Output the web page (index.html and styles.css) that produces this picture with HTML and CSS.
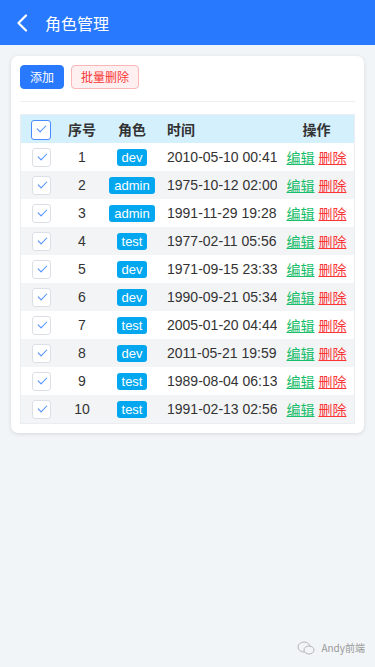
FILE: index.html
```html
<!DOCTYPE html>
<html lang="zh-CN">
<head>
  <meta charset="UTF-8">
  <meta name="viewport" content="width=device-width, initial-scale=1">
  <title>角色管理</title>
  <link rel="stylesheet" href="styles.css">
</head>
<body>
  <div class="navbar">
    <svg class="back" width="12" height="18" viewBox="0 0 12 18">
      <path d="M10 1.5 L2.5 9 L10 16.5" fill="none" stroke="#fff" stroke-width="2.2" stroke-linecap="round" stroke-linejoin="round"/>
    </svg>
    <span class="nav-title">角色管理</span>
  </div>

  <div class="card">
    <div class="toolbar">
      <button class="btn btn-primary">添加</button>
      <button class="btn btn-danger">批量删除</button>
    </div>

    <table class="table">
      <thead>
        <tr>
          <th class="col-check"><span class="check check-head"></span></th>
          <th class="col-no">序号</th>
          <th class="col-role">角色</th>
          <th class="col-time">时间</th>
          <th class="col-op">操作</th>
        </tr>
      </thead>
      <tbody>
        <tr><td class="col-check"><span class="check"></span></td><td class="col-no">1</td><td class="col-role"><span class="tag">dev</span></td><td class="col-time"><div class="clip">2010-05-10 00:41:20</div></td><td class="col-op"><a class="edit">编辑</a> <a class="del">删除</a></td></tr>
        <tr><td class="col-check"><span class="check"></span></td><td class="col-no">2</td><td class="col-role"><span class="tag">admin</span></td><td class="col-time"><div class="clip">1975-10-12 02:00:12</div></td><td class="col-op"><a class="edit">编辑</a> <a class="del">删除</a></td></tr>
        <tr><td class="col-check"><span class="check"></span></td><td class="col-no">3</td><td class="col-role"><span class="tag">admin</span></td><td class="col-time"><div class="clip">1991-11-29 19:28:45</div></td><td class="col-op"><a class="edit">编辑</a> <a class="del">删除</a></td></tr>
        <tr><td class="col-check"><span class="check"></span></td><td class="col-no">4</td><td class="col-role"><span class="tag">test</span></td><td class="col-time"><div class="clip">1977-02-11 05:56:31</div></td><td class="col-op"><a class="edit">编辑</a> <a class="del">删除</a></td></tr>
        <tr><td class="col-check"><span class="check"></span></td><td class="col-no">5</td><td class="col-role"><span class="tag">dev</span></td><td class="col-time"><div class="clip">1971-09-15 23:33:09</div></td><td class="col-op"><a class="edit">编辑</a> <a class="del">删除</a></td></tr>
        <tr><td class="col-check"><span class="check"></span></td><td class="col-no">6</td><td class="col-role"><span class="tag">dev</span></td><td class="col-time"><div class="clip">1990-09-21 05:34:50</div></td><td class="col-op"><a class="edit">编辑</a> <a class="del">删除</a></td></tr>
        <tr><td class="col-check"><span class="check"></span></td><td class="col-no">7</td><td class="col-role"><span class="tag">test</span></td><td class="col-time"><div class="clip">2005-01-20 04:44:18</div></td><td class="col-op"><a class="edit">编辑</a> <a class="del">删除</a></td></tr>
        <tr><td class="col-check"><span class="check"></span></td><td class="col-no">8</td><td class="col-role"><span class="tag">dev</span></td><td class="col-time"><div class="clip">2011-05-21 19:59:02</div></td><td class="col-op"><a class="edit">编辑</a> <a class="del">删除</a></td></tr>
        <tr><td class="col-check"><span class="check"></span></td><td class="col-no">9</td><td class="col-role"><span class="tag">test</span></td><td class="col-time"><div class="clip">1989-08-04 06:13:27</div></td><td class="col-op"><a class="edit">编辑</a> <a class="del">删除</a></td></tr>
        <tr><td class="col-check"><span class="check"></span></td><td class="col-no">10</td><td class="col-role"><span class="tag">test</span></td><td class="col-time"><div class="clip">1991-02-13 02:56:40</div></td><td class="col-op"><a class="edit">编辑</a> <a class="del">删除</a></td></tr>
      </tbody>
    </table>
  </div>

  <div class="watermark">
    <svg width="18" height="14" viewBox="0 0 18 14">
      <ellipse cx="7" cy="6" rx="6" ry="5" fill="none" stroke="#b5b5b5" stroke-width="1"/>
      <ellipse cx="12" cy="9" rx="5" ry="4" fill="#f2f5f8" stroke="#b5b5b5" stroke-width="1"/>
    </svg>
    <span>Andy前端</span>
  </div>
</body>
</html>
```

FILE: styles.css
```css
body {
  margin: 0;
  background-color: #f2f5f8;
  font-family: "Noto Sans CJK SC", "Liberation Sans", sans-serif;
  color: #333;
  min-height: 667px;
  position: relative;
}
.navbar {
  height: 45px;
  background-color: #2979ff;
  display: flex;
  align-items: center;
  padding-left: 16px;
}
.back {
  margin-right: 17px;
}
.nav-title {
  color: #fff;
  font-size: 16px;
}
.card {
  margin: 11px 11px 0;
  background-color: #fff;
  border-radius: 7px;
  padding: 9px 9px 9px;
  box-shadow: 0 1px 4px rgba(0, 0, 0, 0.12);
}
.toolbar {
  display: flex;
  gap: 7px;
  padding-bottom: 12px;
  border-bottom: 1px solid #eee;
  margin-bottom: 12px;
}
.btn {
  height: 24px;
  border-radius: 4px;
  font-family: inherit;
  font-size: 12px;
  padding: 0 9px;
  line-height: 22px;
  border: 1px solid transparent;
}
.btn-primary {
  background-color: #2979ff;
  border-color: #2979ff;
  color: #fff;
}
.btn-danger {
  background-color: #fef0f0;
  border-color: #fab6b6;
  color: #fa3534;
}
.table {
  width: 100%;
  border-collapse: collapse;
  table-layout: fixed;
  border: 1px solid #ebeef0;
  font-size: 14px;
}
.table th {
  background-color: #d4f0fd;
  height: 28px;
  font-weight: bold;
  font-size: 14px;
  padding: 0;
}
.table td {
  height: 28px;
  padding: 0;
  font-family: "Liberation Sans", "Noto Sans CJK SC", sans-serif;
}
.table tbody tr:nth-child(even) {
  background-color: #f3f4f6;
}
.col-check {
  width: 40px;
  text-align: center;
}
.col-no {
  width: 42px;
  text-align: center;
}
.col-role {
  width: 58px;
  text-align: center;
}
.col-time {
  text-align: left;
  padding-left: 6px !important;
}
.col-op {
  width: 75px;
  text-align: center;
}
.clip {
  width: 110px;
  overflow: hidden;
  white-space: nowrap;
}
.check {
  display: inline-block;
  width: 17px;
  height: 17px;
  border: 1px solid #dcdfe6;
  border-radius: 3px;
  vertical-align: middle;
  position: relative;
  background-color: #fff;
}
.check::after {
  content: "";
  position: absolute;
  left: 5px;
  top: 4px;
  width: 8px;
  height: 4px;
  border-left: 1.5px solid #4a8cff;
  border-bottom: 1.5px solid #4a8cff;
  transform: rotate(-45deg);
}
.check-head {
  width: 18px;
  height: 18px;
  border-color: #4a8cff;
}
.tag {
  display: inline-block;
  background-color: #02a7f0;
  color: #fff;
  font-size: 13px;
  line-height: 17px;
  padding: 0 5px;
  border-radius: 3px;
}
.edit,
.del {
  text-decoration: underline;
  font-family: "Noto Sans CJK SC", sans-serif;
  font-size: 14px;
}
.edit {
  color: #19be6b;
}
.del {
  color: #fa3534;
}
.watermark {
  position: absolute;
  right: 10px;
  bottom: 12px;
  display: flex;
  align-items: center;
  gap: 6px;
  color: #999;
  font-size: 10px;
}
```
